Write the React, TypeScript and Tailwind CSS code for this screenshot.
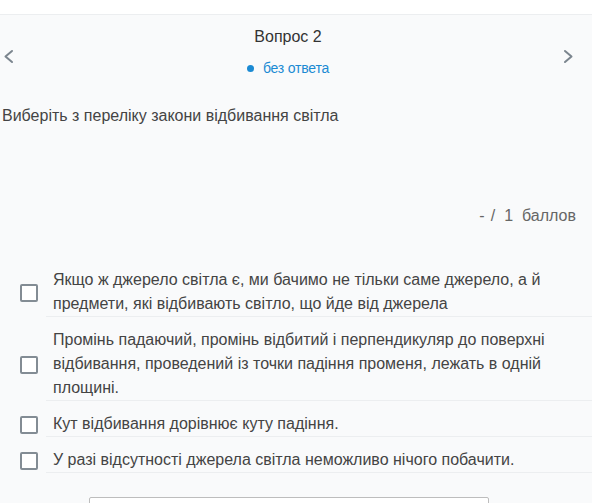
import React from "react";

const options: string[] = [
  "Якщо ж джерело світла є, ми бачимо не тільки саме джерело, а й предмети, які відбивають світло, що йде від джерела",
  "Промінь падаючий, промінь відбитий і перпендикуляр до поверхні відбивання, проведений із точки падіння променя, лежать в одній площині.",
  "Кут відбивання дорівнює куту падіння.",
  "У разі відсутності джерела світла неможливо нічого побачити.",
];

const Chevron = ({ dir }: { dir: "left" | "right" }) => (
  <svg width="16" height="16" viewBox="0 0 16 16" fill="none" className="mt-[23px] shrink-0">
    <path
      d={dir === "left" ? "M12 3 L5.5 8.5 L12 14" : "M5 3 L11.5 8.5 L5 14"}
      stroke="#7b858e"
      strokeWidth="2"
      strokeLinecap="round"
      strokeLinejoin="round"
    />
  </svg>
);

const App: React.FC = () => {
  return (
    <div
      className="min-h-screen bg-[#f9fafb] text-[#444]"
      style={{ fontFamily: '"Liberation Sans", Arial, sans-serif' }}
    >
      {/* top strip */}
      <div className="h-[15px] bg-white border-b border-[#eceef0]" />

      {/* question header */}
      <div className="flex items-start pt-[10px] pr-[16px]">
        <Chevron dir="left" />
        <div className="flex-1 flex flex-col items-center">
          <div className="text-[16px] leading-6 text-[#333]">Вопрос 2</div>
          <div className="mt-[9px] flex items-center gap-[9px] text-[14px] leading-5 text-[#1b8ad3]">
            <span className="w-[7px] h-[7px] rounded-full bg-[#1b8ad3]" />
            <span className="tracking-[-0.2px]">без ответа</span>
          </div>
        </div>
        <Chevron dir="right" />
      </div>

      {/* question text */}
      <div className="mt-[26px] pl-[2px] text-[16px] leading-6 text-[#444]">
        Виберіть з переліку закони відбивання світла
      </div>

      {/* score */}
      <div className="mt-[76px] pr-[16px] flex justify-end text-[16px] leading-6 text-[#666]">
        <span>-</span>
        <span className="ml-[6px]">/</span>
        <span className="ml-[9px]">1</span>
        <span className="ml-[9px]">баллов</span>
      </div>

      {/* options */}
      <div className="mt-[29px] flex flex-col">
        {options.map((text, idx) => (
          <div key={idx} className="pt-[11px] pl-[20px] flex items-center">
            <span className="w-[18px] h-[18px] shrink-0 border-2 border-[#838c94] rounded-[2px] bg-white" />
            <div className="ml-[8px] flex-1 pl-[7px] pr-[36px] border-b border-[#eceef0] text-[16px] leading-6 text-[#444]">
              {text}
            </div>
          </div>
        ))}
      </div>

      {/* bottom input */}
      <div className="mt-[24px] ml-[89px] w-[400px] h-[40px] bg-white border border-[#bdbdbd] rounded-[2px]" />
    </div>
  );
};

export default App;
